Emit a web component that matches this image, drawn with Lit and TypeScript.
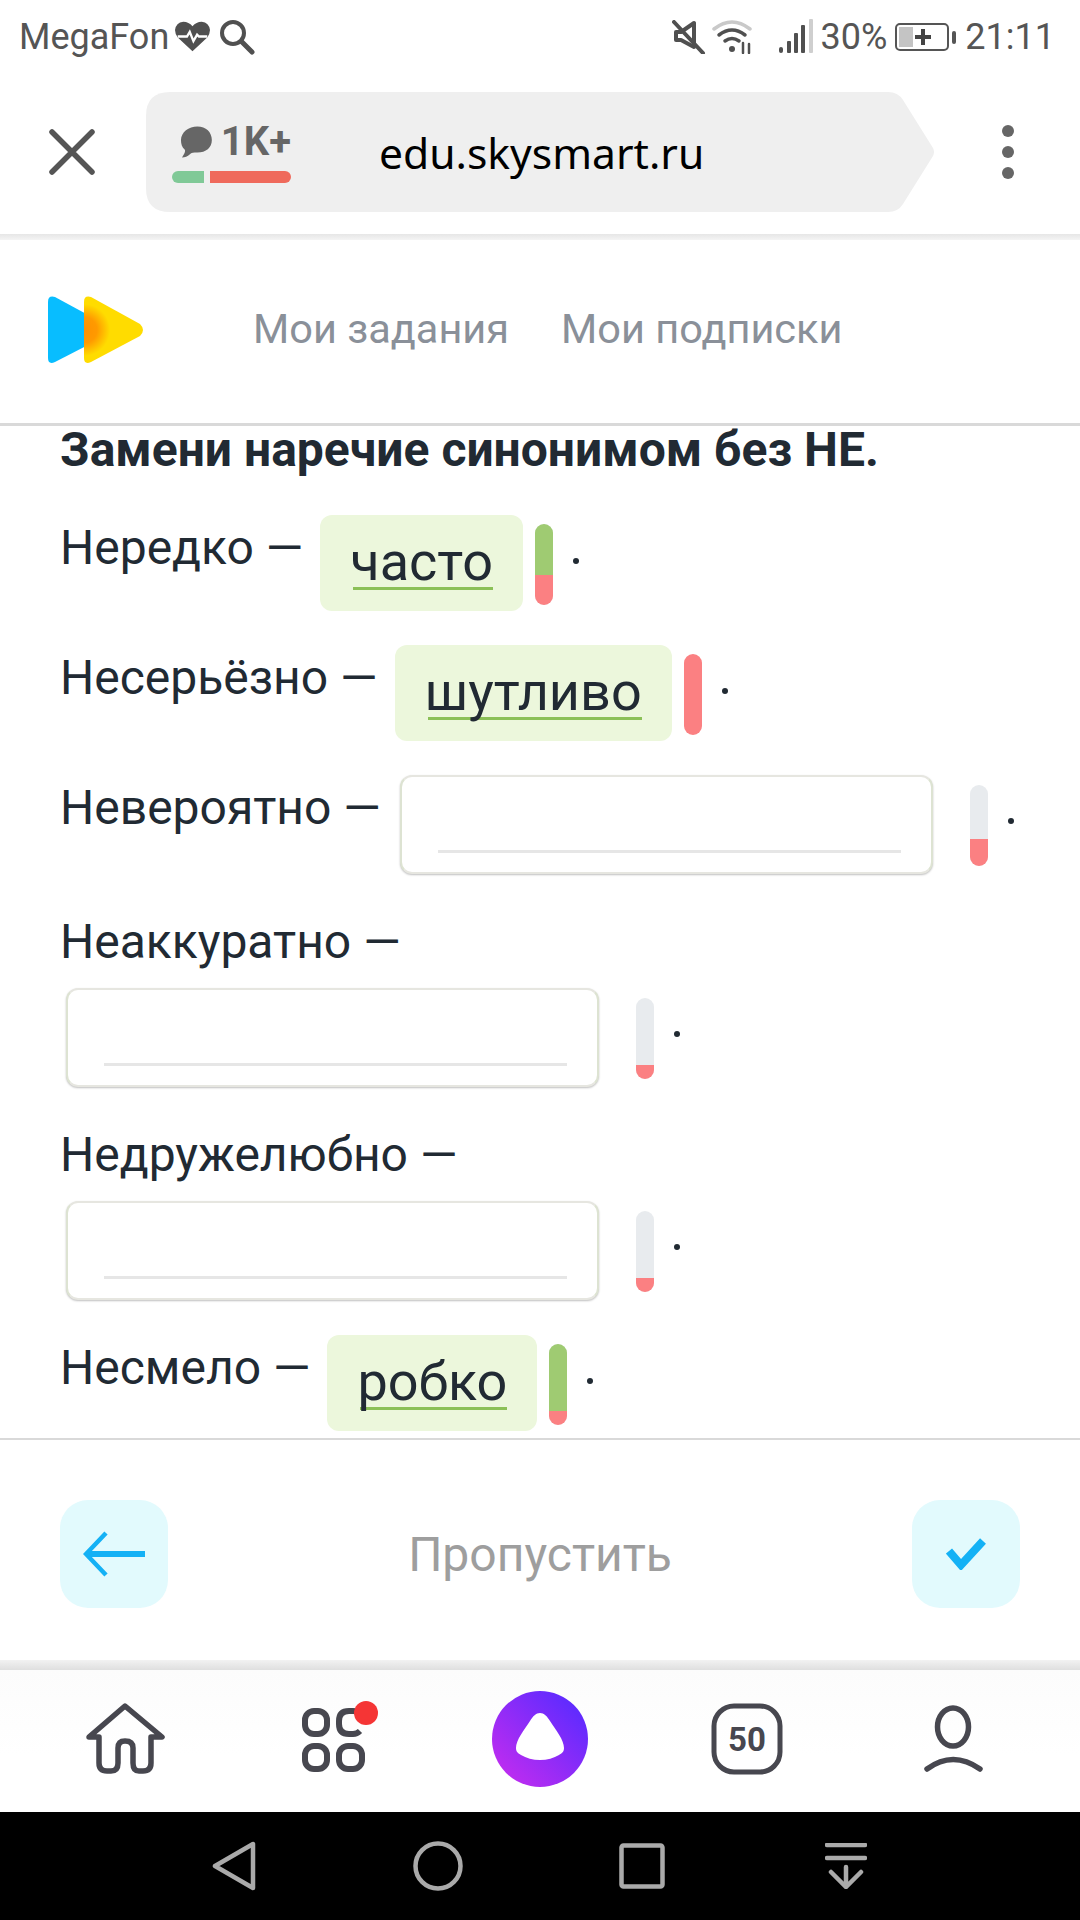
import { LitElement, css, html, svg } from 'lit';
import { customElement } from 'lit/decorators.js';

type Row = {
  label: string;
  answer?: string;
  fill: number;
  good?: boolean;
  stacked?: boolean;
};

const rows: Row[] = [
  { label: 'Нередко —', answer: 'часто', fill: 37, good: true },
  { label: 'Несерьёзно —', answer: 'шутливо', fill: 100 },
  { label: 'Невероятно —', fill: 33 },
  { label: 'Неаккуратно —', fill: 17, stacked: true },
  { label: 'Недружелюбно —', fill: 17, stacked: true },
  { label: 'Несмело —', answer: 'робко', fill: 17, good: true },
];

const navIcons = [
  svg`<svg width="80" height="72" viewBox="0 0 80 72" fill="none" stroke="#47474f" stroke-width="5.5" stroke-linejoin="round" stroke-linecap="round">
    <path d="M3 34 39 3 76 34H65V60Q65 68 57 68H53Q47 68 47 60V45Q47 38 39 38 32 38 32 45V60Q32 68 25 68H21Q13 68 13 60V34Z"/></svg>`,
  svg`<svg class="apps" width="80" height="72" viewBox="0 0 80 72" fill="none" stroke="#47474f" stroke-width="6">
    <rect x="12" y="8" width="22" height="23" rx="9"/>
    <path d="M69 10Q65 8 60 8H56Q46 8 46 18V21Q46 31 56 31H60Q64 31 67 28"/>
    <rect x="12" y="43" width="22" height="23" rx="9"/>
    <rect x="46" y="43" width="23" height="23" rx="9"/>
    <circle cx="73" cy="10" r="12" fill="#f53535" stroke="none"/></svg>`,
  svg`<svg width="96" height="96" viewBox="1 1 96 96">
    <defs><linearGradient id="al" x1="1" y1="0" x2="0" y2="1"><stop offset="0.1" stop-color="#5a2bff"/><stop offset="0.9" stop-color="#c02cf0"/></linearGradient></defs>
    <circle cx="49" cy="49" r="48" fill="url(#al)"/>
    <path d="M49 23C53 23 56 26 59 31 65 40 73 50 73 58 73 62 71 63 68 65 63 68 56 70 49 70 42 70 35 68 30 65 27 63 25 62 25 58 25 50 33 40 39 31 42 26 45 23 49 23Z" fill="#fff"/></svg>`,
  svg`<svg width="72" height="72" viewBox="0 0 72 72"><rect x="3" y="3" width="66" height="66" rx="20" fill="none" stroke="#47474f" stroke-width="5"/>
    <text x="36" y="48" text-anchor="middle" font-family="Roboto, sans-serif" font-weight="700" font-size="33" fill="#47474f">50</text></svg>`,
  svg`<svg width="60" height="70" viewBox="0 0 60 70" fill="none" stroke="#47474f" stroke-width="5.5" stroke-linecap="round">
    <ellipse cx="29" cy="23" rx="15.5" ry="19"/><path d="M3 65Q29 46 56 65"/></svg>`,
];

@customElement('app-root')
export class AppRoot extends LitElement {
  static styles = css`
    :host {
      display: block;
      width: 1080px;
      height: 1920px;
      background: #fff;
      overflow: hidden;
      font-family: Roboto, 'Liberation Sans', sans-serif;
      color: #212a33;
    }
    .status {
      height: 75px;
      box-sizing: border-box;
      display: flex;
      align-items: center;
      padding: 0 25px 2px 19px;
      color: #555;
      font-size: 36px;
    }
    .status svg { flex: none; }
    .status .grow { flex: 1; }
    .carrier { margin-right: 6px; }
    .browser {
      height: 159px;
      display: flex;
      align-items: center;
      padding: 17px 0 22px 49px;
      box-sizing: border-box;
    }
    .pill {
      position: relative;
      margin-left: 51px;
      width: 789px;
      height: 120px;
      display: flex;
      align-items: center;
    }
    .pill > svg { position: absolute; left: 0; top: 0; }
    .stats {
      position: relative;
      margin-left: 26px;
      width: 119px;
      display: flex;
      flex-direction: column;
      gap: 8px;
    }
    .stat-top {
      display: flex;
      align-items: center;
      gap: 8px;
      margin-left: 8px;
      font-size: 40px;
      line-height: 42px;
      font-weight: 700;
      color: #666;
      white-space: nowrap;
    }
    .stat-bars { display: flex; gap: 6px; }
    .stat-bars i { display: block; height: 12px; }
    .stat-bars .g { width: 32px; background: #80c997; border-radius: 6px 0 0 6px; }
    .stat-bars .r { width: 81px; background: #ef6a5c; border-radius: 0 6px 6px 0; }
    .url {
      position: relative;
      margin-left: 88px;
      font-size: 42.6px;
      font-family: 'Noto Sans', sans-serif;
      color: #000;
    }
    .dots {
      margin-left: 67px;
      display: flex;
      flex-direction: column;
      gap: 9px;
    }
    .dots i { width: 12px; height: 12px; border-radius: 50%; background: #666; }
    .shade {
      height: 6px;
      background: linear-gradient(#e6e6e6, #f4f4f4);
    }
    .site {
      height: 183px;
      box-sizing: border-box;
      display: flex;
      align-items: center;
      padding: 0 0 3px 48px;
    }
    .rule { height: 3px; background: #d9d9d9; }
    .site nav {
      margin-left: 109px;
      padding-bottom: 4px;
      display: flex;
      gap: 52px;
      font-size: 41.5px;
      color: #8a9099;
    }
    .task {
      height: 1012px;
      box-sizing: border-box;
      padding: 0 60px;
    }
    h1 {
      margin: 0 0 41px;
      font-size: 48px;
      line-height: 48px;
      font-weight: 700;
      white-space: nowrap;
    }
    .row {
      display: flex;
      flex-wrap: wrap;
      align-items: flex-start;
      margin-bottom: 34px;
      font-size: 48px;
      line-height: 60px;
    }
    .label { margin: 3px 17px 0 0; }
    .row.stacked .label { flex: 0 0 100%; margin: 3px 0 16px; }
    .chip {
      height: 96px;
      box-sizing: border-box;
      padding: 17px 30px 0;
      border-radius: 12px;
      background: #ecf7dc;
      font-size: 54px;
      line-height: 60px;
    }
    .chip span {
      display: inline-block;
      height: 58px;
      background: linear-gradient(#8bc057, #8bc057) 3px 100% / 100% 3px no-repeat;
    }
    .blank {
      width: 533px;
      height: 99px;
      margin: 0 0 1px 2px;
      box-sizing: border-box;
      padding: 0 30px 0 36px;
      display: flex;
      align-items: flex-end;
      background: #fff;
      border: 2px solid #e6e6e0;
      border-right-color: #dde3d2;
      border-left-color: #dde3d2;
      border-radius: 12px;
      box-shadow: 0 1px 2px rgba(0, 0, 0, 0.25);
    }
    .row.stacked .blank { margin-left: 6px; }
    .blank i {
      display: block;
      flex: 1;
      height: 3px;
      margin-bottom: 19px;
      background: #e6e6e6;
    }
    .meter {
      width: 18px;
      height: 81px;
      margin: 9px 0 0 12px;
      border-radius: 9px;
      background: #e8ebee;
      overflow: hidden;
      display: flex;
      flex-direction: column;
    }
    .blank + .meter { margin-left: 37px; margin-top: 10px; }
    .meter b { flex: 1; }
    .meter b.good { background: #9fcb72; }
    .meter u { display: block; background: #fb8082; }
    .dot {
      width: 6px;
      height: 6px;
      margin: 43px 0 0 20px;
      border-radius: 50%;
      background: #212a33;
    }
    .actions {
      height: 222px;
      box-sizing: border-box;
      border-top: 2px solid #d9d9d9;
      padding: 60px 60px 0;
      display: flex;
      justify-content: space-between;
      align-items: flex-start;
    }
    .btn {
      width: 108px;
      height: 108px;
      border-radius: 28px;
      background: #e2fafd;
      display: flex;
      align-items: center;
      justify-content: center;
    }
    .skip {
      font-size: 48px;
      line-height: 110px;
      color: #9e9e9e;
    }
    .shade2 {
      height: 10px;
      background: linear-gradient(#f2f2f2, #dfdfdf);
    }
    .tabs {
      height: 142px;
      box-sizing: border-box;
      padding: 0 23px 4px;
      display: grid;
      grid-template-columns: repeat(5, 1fr);
      align-items: center;
      justify-items: center;
      background: linear-gradient(#fcfcfc, #fff 60%);
    }
    .tabs .apps { overflow: visible; }
    .keys {
      height: 108px;
      background: #000;
      display: grid;
      grid-template-columns: repeat(4, 204px);
      justify-content: center;
      align-items: center;
      justify-items: center;
    }
  `;

  private renderRow(r: Row) {
    return html`<div class="row ${r.stacked ? 'stacked' : ''}">
      <div class="label">${r.label}</div>
      ${r.answer
        ? html`<div class="chip"><span>${r.answer}</span></div>`
        : html`<div class="blank"><i></i></div>`}
      <div class="meter">
        <b class=${r.good ? 'good' : ''}></b>
        <u style="height:${r.fill}%"></u>
      </div>
      <div class="dot"></div>
    </div>`;
  }

  render() {
    return html`
      <div class="status">
        <span class="carrier">MegaFon</span>
        <svg width="35" height="31" viewBox="0 0 38 32"><path d="M19 32 3 17Q0 13 0 9 1 1 9 0 15 0 19 5 23 0 29 0 37 1 38 9 38 13 35 17Z" fill="#505050"/><path d="M3 16H13L16 11 20 21 24 14 26 16H35" fill="none" stroke="#fff" stroke-width="2.5"/></svg>
        <svg style="margin-left:9px" width="36" height="36" viewBox="0 0 36 36" fill="none" stroke="#505050" stroke-width="4" stroke-linecap="round"><circle cx="14" cy="14" r="11"/><path d="M23 23 33 33" stroke-width="5"/></svg>
        <span class="grow"></span>
        <svg width="34" height="34" viewBox="0 0 34 34"><path d="M4 12H9L22 3V27L9 20H4Z" fill="none" stroke="#505050" stroke-width="4" stroke-linejoin="round"/><path d="M2 2 31 33" stroke="#505050" stroke-width="4" stroke-linecap="round"/></svg>
        <svg style="margin-left:6px" width="42" height="34" viewBox="0 0 42 34" fill="none" stroke="#505050" stroke-width="3.5" stroke-linecap="round"><path d="M2 9Q20 -5 38 9" stroke="#c9c9c9"/><path d="M7 15Q20 5 33 15"/><path d="M13 21Q20 16 27 21"/><circle cx="20" cy="29" r="3" fill="#505050" stroke="none"/><path d="M31 23V33M37 24V33" stroke-width="2.5"/></svg>
        <svg style="margin-left:25px" width="36" height="36" viewBox="0 0 36 36"><g fill="#505050"><rect x="0" y="28" width="4" height="6" rx="2"/><rect x="8" y="22" width="4" height="12" rx="1"/><rect x="15" y="14" width="4" height="20" rx="1"/><rect x="22" y="6" width="4" height="28" rx="1"/></g><rect x="30" y="0" width="4" height="34" rx="1" fill="#cfcfcf"/></svg>
        <span style="margin-left:6px">30%</span>
        <svg style="margin-left:8px" width="62" height="30" viewBox="0 0 62 30"><rect x="1" y="2" width="52" height="26" rx="4" fill="none" stroke="#555" stroke-width="2"/><rect x="4" y="5" width="14" height="20" fill="#c4c4c4"/><path d="M20 15H36M28 7V23" stroke="#444" stroke-width="4"/><rect x="57" y="9" width="4" height="13" rx="2" fill="#555"/></svg>
        <span style="margin-left:8px">21:11</span>
      </div>

      <div class="browser">
        <svg width="46" height="46" viewBox="0 0 46 46" stroke="#555" stroke-width="5.5" stroke-linecap="round"><path d="M3 3 43 43M43 3 3 43"/></svg>
        <div class="pill">
          <svg width="789" height="120" viewBox="0 0 789 120"><path d="M24 0H742Q752 0 757 8L787 56Q789 60 787 64L757 112Q752 120 742 120H24Q0 120 0 96V24Q0 0 24 0Z" fill="#efefef"/></svg>
          <div class="stats">
            <div class="stat-top">
              <svg width="34" height="34" viewBox="0 0 34 34"><path d="M18 1C27 1 33 7 33 15S27 28 18 28C14 28 12 28 10 30 8 32 5 33 2 33 4 30 6 27 5 25 2 23 1 19 1 15 1 7 9 1 18 1Z" fill="#666"/></svg>
              <span>1K+</span>
            </div>
            <div class="stat-bars"><i class="g"></i><i class="r"></i></div>
          </div>
          <div class="url">edu.skysmart.ru</div>
        </div>
        <div class="dots"><i></i><i></i><i></i></div>
      </div>
      <div class="shade"></div>

      <div class="site">
        <svg width="96" height="68" viewBox="0 0 96 68">
          <defs><radialGradient id="lg" gradientUnits="userSpaceOnUse" cx="36" cy="34" r="26"><stop offset="0" stop-color="#ff9000"/><stop offset="0.5" stop-color="#ff9a00"/><stop offset="1" stop-color="#ffdc00"/></radialGradient></defs>
          <path d="M0 6Q0 -1 7 1L42 20V48L7 66Q0 69 0 62Z" fill="#08bdff"/>
          <path d="M36 6Q36 -1 43 1L92 28Q98 34 92 40L43 66Q36 69 36 62Z" fill="url(#lg)"/>
        </svg>
        <nav><span>Мои задания</span><span>Мои подписки</span></nav>
      </div>
      <div class="rule"></div>

      <div class="task">
        <h1>Замени наречие синонимом без НЕ.</h1>
        ${rows.map((r) => this.renderRow(r))}
      </div>

      <div class="actions">
        <div class="btn"><svg width="62" height="46" viewBox="0 0 62 46" fill="none" stroke="#14b1f5" stroke-width="6"><path d="M4 23H62"/><path d="M23 2 3 23 23 44" stroke-width="4.5"/></svg></div>
        <div class="skip">Пропустить</div>
        <div class="btn"><svg width="40" height="32" viewBox="0 0 40 32" fill="none" stroke="#14b1f5" stroke-width="8"><path d="M3 13 15 27 37 3"/></svg></div>
      </div>
      <div class="shade2"></div>

      <div class="tabs">${navIcons}</div>

      <div class="keys">
        <svg width="44" height="50" viewBox="0 0 44 50" fill="none" stroke="#aaa" stroke-width="4.5" stroke-linejoin="round"><path d="M41 3V47L3 25Z"/></svg>
        <svg width="50" height="50" viewBox="0 0 50 50" fill="none" stroke="#aaa" stroke-width="4.5"><circle cx="25" cy="25" r="22.5"/></svg>
        <svg width="46" height="46" viewBox="0 0 46 46" fill="none" stroke="#aaa" stroke-width="4.5" stroke-linejoin="round"><rect x="2.5" y="2.5" width="41" height="41" rx="2"/></svg>
        <svg width="42" height="46" viewBox="0 0 42 46" fill="none" stroke="#aaa" stroke-width="4.5" stroke-linecap="round"><path d="M2 2H40M2 15H40M21 24V43M6 29 21 44 36 29"/></svg>
      </div>
    `;
  }
}
